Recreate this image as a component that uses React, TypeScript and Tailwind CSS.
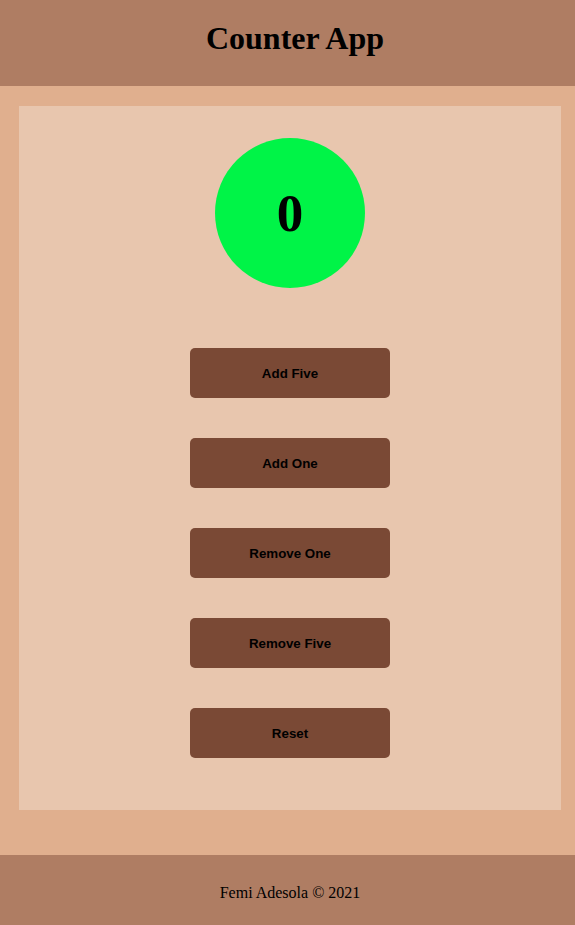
import { useState } from 'react';

const actions = [
  { label: 'Add Five', delta: 5 },
  { label: 'Add One', delta: 1 },
  { label: 'Remove One', delta: -1 },
  { label: 'Remove Five', delta: -5 },
];

export default function App() {
  const [count, setCount] = useState(0);

  return (
    <div className="min-h-[925px] flex flex-col bg-[#e0af8e] font-['Liberation_Serif',serif] text-black">
      {/* Header */}
      <header className="h-[86px] bg-[#af7d63] flex items-center justify-center pl-[15px]">
        <h1 className="text-[32px] font-bold leading-none -mt-[10px]">Counter App</h1>
      </header>

      {/* Main */}
      <main className="flex-1 pl-[19px] pr-[14px] pt-[20px] pb-[45px]">
        <div className="bg-[#e8c6ae] h-[704px] flex flex-col items-center pt-[32px]">
          <div className="w-[150px] h-[150px] rounded-full bg-[#00f447] flex items-center justify-center">
            <span className="text-[53px] font-bold leading-none">{count}</span>
          </div>

          <div className="mt-[60px] flex flex-col gap-[40px]">
            {actions.map((a) => (
              <button
                key={a.label}
                onClick={() => setCount((c) => c + a.delta)}
                className="w-[200px] h-[50px] pt-[2px] rounded-[5px] bg-[#7a4935] text-[13.33px] font-bold font-['Liberation_Sans',sans-serif]"
              >
                {a.label}
              </button>
            ))}
            <button
              onClick={() => setCount(0)}
              className="w-[200px] h-[50px] pt-[2px] rounded-[5px] bg-[#7a4935] text-[13.33px] font-bold font-['Liberation_Sans',sans-serif]"
            >
              Reset
            </button>
          </div>
        </div>
      </main>

      {/* Footer */}
      <footer className="h-[70px] bg-[#af7d63] flex items-center justify-center pt-[6px] pl-[5px]">
        <p className="text-[16px]">Femi Adesola © 2021</p>
      </footer>
    </div>
  );
}
